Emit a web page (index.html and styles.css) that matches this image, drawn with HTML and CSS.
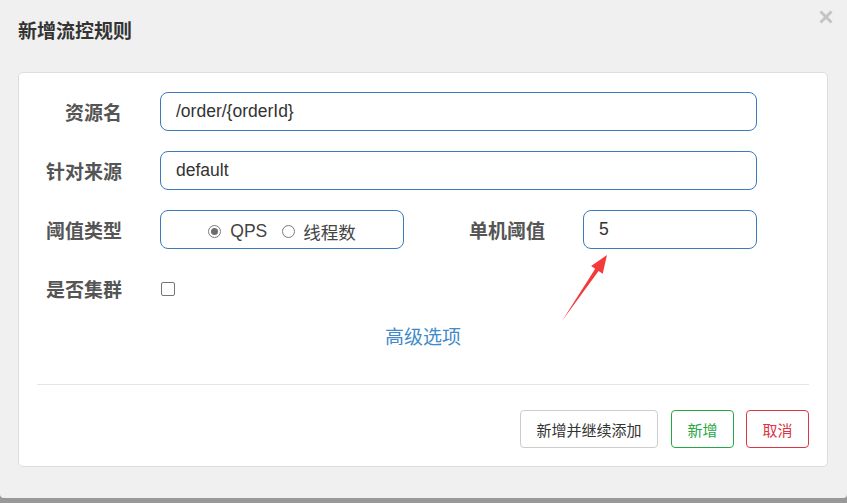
FILE: index.html
```html
<!DOCTYPE html>
<html lang="zh-CN">
<head>
    <meta charset="UTF-8">
    <title>新增流控规则</title>
    <link rel="stylesheet" href="styles.css">
</head>
<body>
    <div class="modal">
        <div class="modal-header">
            <h4 class="modal-title">新增流控规则</h4>
            <button class="close" type="button">
                <svg width="14" height="14" viewBox="0 0 14 14">
                    <path d="M1.5 1.5 L12.5 12.5 M12.5 1.5 L1.5 12.5" stroke="#c4c4c4" stroke-width="3" fill="none"/>
                </svg>
            </button>
        </div>

        <div class="panel">
            <form class="rule-form">
                <div class="form-row">
                    <label class="form-label">资源名</label>
                    <input class="form-input" type="text" value="/order/{orderId}">
                </div>
                <div class="form-row">
                    <label class="form-label">针对来源</label>
                    <input class="form-input" type="text" value="default">
                </div>
                <div class="form-row">
                    <label class="form-label">阈值类型</label>
                    <div class="radio-box">
                        <span class="radio checked"></span><span class="radio-text">QPS</span>
                        <span class="radio second"></span><span class="radio-text">线程数</span>
                    </div>
                    <label class="form-label wide">单机阈值</label>
                    <input class="form-input" type="text" value="5">
                </div>
                <div class="form-row">
                    <label class="form-label">是否集群</label>
                    <span class="checkbox"></span>
                </div>
                <div class="advanced"><a href="#">高级选项</a></div>
            </form>

            <hr class="divider">

            <div class="footer">
                <button class="btn btn-default" type="button">新增并继续添加</button>
                <button class="btn btn-success" type="button">新增</button>
                <button class="btn btn-danger" type="button">取消</button>
            </div>
        </div>
    </div>

    <!-- annotation arrow drawn over the form -->
    <svg class="arrow" width="847" height="503" viewBox="0 0 847 503">
        <polygon points="562,321 598.6,271 602.7,273.8 607,255 591.1,266 595.2,268.8" fill="#f23b3b"/>
    </svg>
</body>
</html>
```

FILE: styles.css
```css
body {
    margin: 0;
    background: #999;
    font-family: "Liberation Sans", "Noto Sans CJK SC", sans-serif;
    color: #333;
}

.modal {
    width: 847px;
    height: 498px;
    background: #f0f0f0;
    border-radius: 0 0 4px 4px;
    box-sizing: border-box;
}

.modal-header {
    display: flex;
    justify-content: space-between;
    align-items: flex-start;
    height: 72px;
    padding: 10px 14px 0 18px;
    box-sizing: border-box;
}

.modal-title {
    margin: 10px 0 0;
    font-size: 19px;
    line-height: 20px;
    font-weight: bold;
    color: #333;
    font-family: "Noto Sans CJK SC", sans-serif;
}

.close {
    border: none;
    background: none;
    padding: 0;
    width: 14px;
    height: 14px;
    display: block;
}

.close svg { display: block; }

.panel {
    margin: 0 19px 0 18px;
    height: 395px;
    box-sizing: border-box;
    background: #fff;
    border: 1px solid #ddd;
    border-radius: 5px;
}

.rule-form {
    padding: 19px 70px 0 0;
}

.form-row {
    display: flex;
    align-items: center;
    height: 39px;
    margin-bottom: 20px;
}

.form-label {
    width: 103px;
    margin-right: 38px;
    text-align: right;
    font-size: 19px;
    font-weight: bold;
    color: #555;
    font-family: "Noto Sans CJK SC", sans-serif;
    flex-shrink: 0;
}

.form-label.wide { width: 141px; }

.form-input {
    flex: 1;
    min-width: 0;
    height: 39px;
    box-sizing: border-box;
    border: 1px solid #3a7bbd;
    border-radius: 8px;
    padding: 0 15px;
    font-size: 17.5px;
    font-family: "Liberation Sans", "Noto Sans CJK SC", sans-serif;
    color: #333;
    outline: none;
}

.radio-box {
    width: 244px;
    height: 39px;
    box-sizing: border-box;
    border: 1px solid #3a7bbd;
    border-radius: 8px;
    display: flex;
    align-items: center;
    justify-content: center;
    padding-top: 3px;
    flex-shrink: 0;
}

.radio {
    width: 13px;
    height: 13px;
    box-sizing: border-box;
    border: 1px solid #7a7a7a;
    border-radius: 50%;
    margin-right: 9px;
    display: flex;
    align-items: center;
    justify-content: center;
}

.radio.checked::after {
    content: "";
    width: 7px;
    height: 7px;
    border-radius: 50%;
    background: #6e6e6e;
}

.radio.second { margin-left: 15px; margin-right: 8px; }

.radio-text {
    font-size: 17.5px;
    color: #444;
    font-family: "Liberation Sans", "Noto Sans CJK SC", sans-serif;
}

.checkbox {
    width: 14px;
    height: 14px;
    box-sizing: border-box;
    border: 1px solid #767676;
    border-radius: 2px;
    margin-left: 1px;
}

.advanced {
    text-align: center;
    padding-left: 70px;
    line-height: 20px;
    margin-top: -2px;
}

.advanced a {
    font-size: 19px;
    color: #428bca;
    text-decoration: none;
    font-family: "Noto Sans CJK SC", sans-serif;
}

.divider {
    margin: 35px 18px 0;
    border: none;
    border-top: 1px solid #e5e5e5;
}

.footer {
    display: flex;
    justify-content: flex-end;
    gap: 12px;
    padding: 25px 18px 0;
}

.btn {
    height: 38px;
    padding: 0 15.5px;
    font-size: 15px;
    font-family: "Noto Sans CJK SC", sans-serif;
    background: #fff;
    color: #333;
    border: 1px solid #ccc;
    border-radius: 4px;
}

.btn-default { margin-right: 1px; }
.btn-success { color: #28a745; border-color: #28a745; }
.btn-danger { color: #dc3545; border-color: #dc3545; }

.arrow {
    position: absolute;
    top: 0;
    left: 0;
    pointer-events: none;
}
```
